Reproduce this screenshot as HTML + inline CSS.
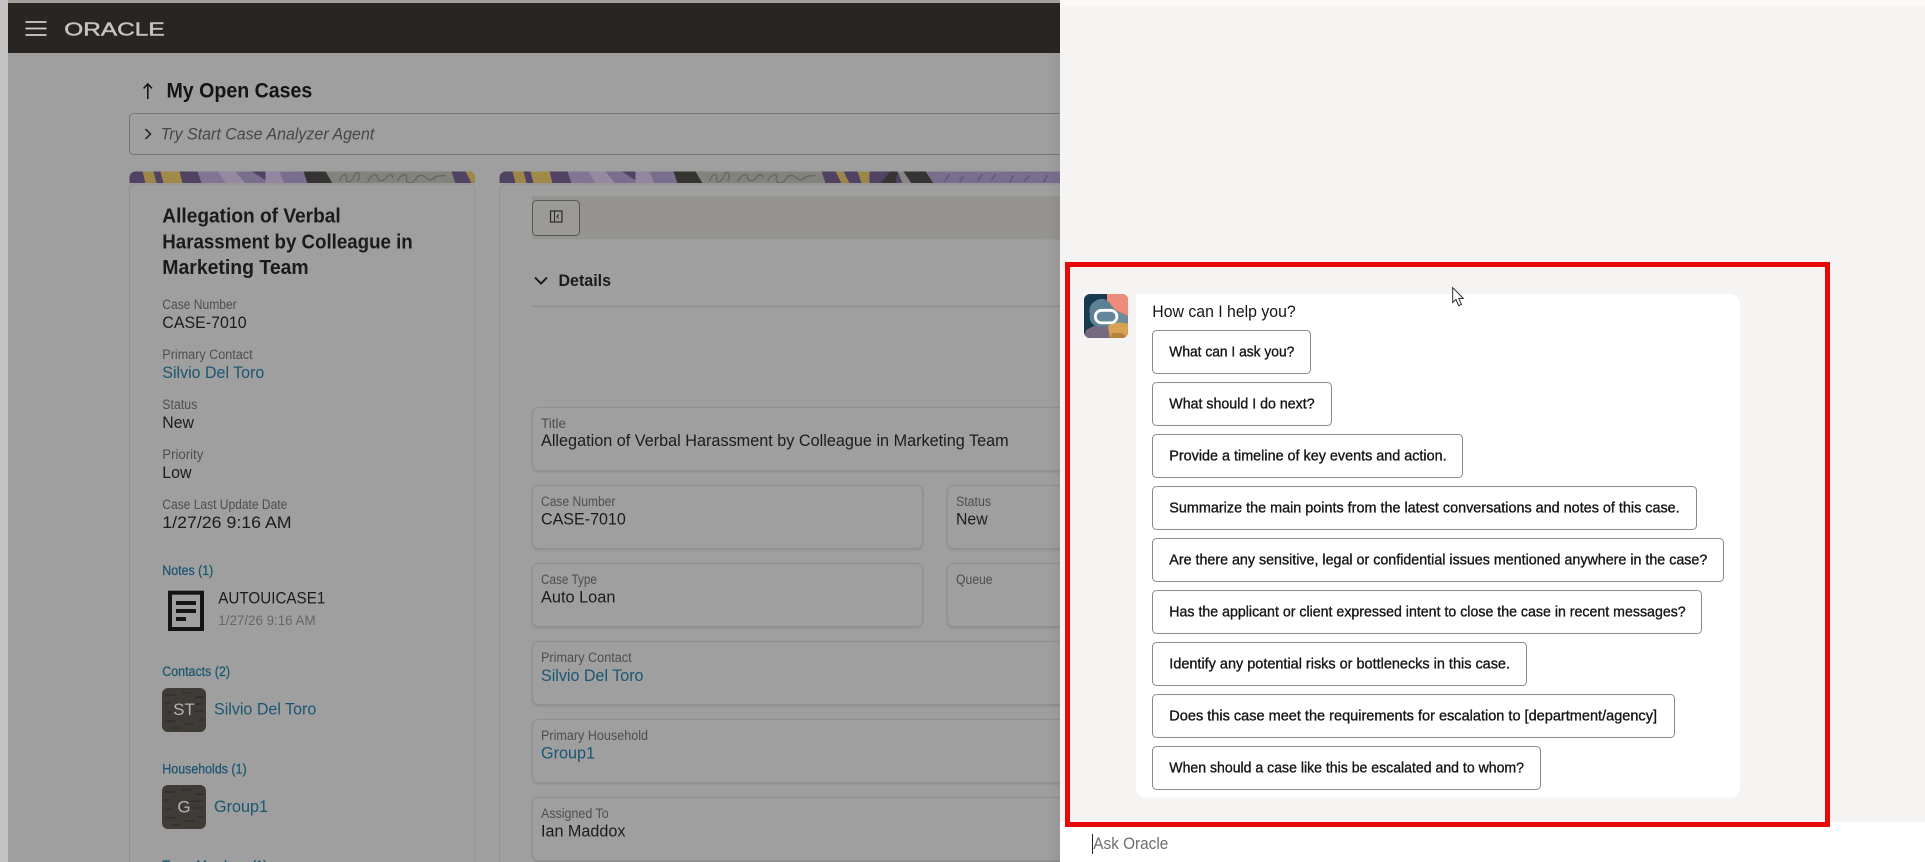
<!DOCTYPE html>
<html lang="en">
<head>
<meta charset="utf-8">
<title>My Open Cases</title>
<style>
html,body{margin:0;padding:0;width:1925px;height:862px;overflow:hidden;background:#9f9f9f}
svg{display:block;position:absolute;left:0;top:0}
text{font-family:"Liberation Sans",sans-serif;white-space:pre}
.lbl{font-size:13.5px;fill:#4e4e4e}
.val{font-size:17px;fill:#1c1c1c}
.lnk{font-size:17px;fill:#1a5672}
.sec{font-size:13.5px;fill:#1a5672;stroke:#1a5672;stroke-width:.25px}
.ttl{font-size:20.5px;font-weight:bold;fill:#1b1b1b}
.btn{fill:#fff;stroke:#8a8a8a;stroke-width:1}
.btxt{font-size:15px;fill:#161513;stroke:#161513;stroke-width:.35px}
.box{fill:#9f9f9f;stroke:#909090;stroke-width:1;filter:drop-shadow(0 1px 1px rgba(0,0,0,.12))}
</style>
</head>
<body>
<svg width="1925" height="862" viewBox="0 0 1925 862" xmlns="http://www.w3.org/2000/svg">
<defs>
<g id="pat">
<rect x="0" y="0" width="600" height="12" fill="#4f4263"/>
<polygon points="13,0 24,0 27,12 16,12" fill="#9c8748"/>
<polygon points="31,0 50,0 53,12 34,12" fill="#9f8a4a"/>
<polygon points="68,0 88,0 96,12 72,12" fill="#827593"/>
<polygon points="88,0 106,0 116,12 96,12" fill="#94899f"/>
<polygon points="106,0 136,0 136,12 116,12" fill="#7a6e8f"/>
<polygon points="122,0 136,0 136,9" fill="#4f4263"/>
<polygon points="136,0 150,0 155,12 136,12" fill="#92879f"/>
<polygon points="150,0 174,0 178,12 155,12" fill="#7a6e8f"/>
<polygon points="174,0 196,0 203,12 178,12" fill="#353433"/>
<polygon points="196,0 322,0 326,12 203,12" fill="#84827d"/>
<path d="M210 10c3-9 8-8 7-3s5 5 8-3 7 1 3 6M238 11c4-8 9-10 10-5s6 4 9 0 7-3 6 1M268 10c3-7 10-9 9-3s6 6 9 1 7-5 10-2 6 4 10-1M304 8c4-5 8-3 12-4" fill="none" stroke="#696763" stroke-width="1.4"/>
<polygon points="336,0 344,0 350,12 342,12" fill="#9c8748"/>
<polygon points="358,0 370,0 370,12 362,12" fill="#9c8748"/>
<polygon points="381,12 391,0 398,0 396,12" fill="#353433"/>
<polygon points="398,0 404,0 412,12 403,12" fill="#878684"/>
<polygon points="404,0 426,0 434,12 412,12" fill="#353433"/>
<rect x="434" y="0" width="130" height="12" fill="#7a6e8f"/>
<polygon points="426,0 436,0 434,12" fill="#7a6e8f"/>
<path d="M445 10l5-7M460 11l4-6M478 10l5-7M492 9l4-6M510 11l4-7M525 10l5-6M544 11l4-7" stroke="#5a4f70" stroke-width="1"/>
</g>
<clipPath id="b1"><path d="M129.5 183V177.5a6 6 0 0 1 6-6H469a6 6 0 0 1 6 6V183z"/></clipPath>
<clipPath id="b2"><path d="M499.5 183V177.5a6 6 0 0 1 6-6H1060V183z"/></clipPath>
<clipPath id="av"><rect x="1084" y="294" width="44" height="44" rx="6"/></clipPath>
<linearGradient id="edge" x1="0" x2="1" y1="0" y2="0"><stop offset="0" stop-color="#000" stop-opacity="0"/><stop offset="1" stop-color="#000" stop-opacity=".05"/></linearGradient>
</defs>

<!-- dimmed page -->
<rect x="0" y="0" width="1060" height="862" fill="#9f9f9f"/>
<rect x="0" y="0" width="8" height="862" fill="#c2c2c2"/>
<rect x="8" y="0" width="1052" height="3" fill="#a39f9b"/>
<rect x="8" y="3" width="1052" height="50" fill="#292522"/>
<path d="M25.5 22H46.5M25.5 28.5H46.5M25.5 35H46.5" stroke="#d0d0d0" stroke-width="1.8"/>
<text x="64.3" y="35.3" font-size="18.5" fill="#c4c4c4" stroke="#c4c4c4" stroke-width=".45" textLength="100.3" lengthAdjust="spacingAndGlyphs">ORACLE</text>

<path d="M147.8 84V99M143.6 88.4L147.8 84L152 88.4" fill="none" stroke="#111" stroke-width="1.5"/>
<text x="166.5" y="97.4" font-size="21" font-weight="bold" fill="#141414" textLength="145.8" lengthAdjust="spacingAndGlyphs">My Open Cases</text>

<rect x="129.5" y="113.5" width="960" height="41" rx="4" fill="#9f9f9f" stroke="#767676"/>
<path d="M145.5 129L150.5 134L145.5 139" fill="none" stroke="#222" stroke-width="1.5"/>
<text x="160.7" y="139.6" font-size="17" font-style="italic" fill="#474747" textLength="213.6" lengthAdjust="spacingAndGlyphs">Try Start Case Analyzer Agent</text>

<!-- banners -->
<g clip-path="url(#b1)"><use href="#pat" x="129.5" y="171.3"/></g>
<g clip-path="url(#b2)"><use href="#pat" x="499.5" y="171.3"/></g>

<!-- left card -->
<path d="M129.5 880V190a6 6 0 0 1 6-6H469a6 6 0 0 1 6 6V880" fill="#9f9f9f" stroke="#919191"/>
<text class="ttl" x="162.3" y="222.5" textLength="178.4" lengthAdjust="spacingAndGlyphs">Allegation of Verbal</text>
<text class="ttl" x="162.3" y="248.5" textLength="250.4" lengthAdjust="spacingAndGlyphs">Harassment by Colleague in</text>
<text class="ttl" x="162.3" y="273.8" textLength="146.4" lengthAdjust="spacingAndGlyphs">Marketing Team</text>

<text class="lbl" x="162.3" y="309" textLength="74.4" lengthAdjust="spacingAndGlyphs">Case Number</text>
<text class="val" x="162.3" y="327.8" textLength="84.3" lengthAdjust="spacingAndGlyphs">CASE-7010</text>
<text class="lbl" x="162.3" y="359" textLength="90.3" lengthAdjust="spacingAndGlyphs">Primary Contact</text>
<text class="lnk" x="162.3" y="377.8" textLength="102" lengthAdjust="spacingAndGlyphs">Silvio Del Toro</text>
<text class="lbl" x="162.3" y="409" textLength="35" lengthAdjust="spacingAndGlyphs">Status</text>
<text class="val" x="162.3" y="427.8" textLength="31.7" lengthAdjust="spacingAndGlyphs">New</text>
<text class="lbl" x="162.3" y="459" textLength="41" lengthAdjust="spacingAndGlyphs">Priority</text>
<text class="val" x="162.3" y="477.8" textLength="29.3" lengthAdjust="spacingAndGlyphs">Low</text>
<text class="lbl" x="162.3" y="509" textLength="125" lengthAdjust="spacingAndGlyphs">Case Last Update Date</text>
<text class="val" x="162.3" y="527.8" textLength="129.3" lengthAdjust="spacingAndGlyphs">1/27/26 9:16 AM</text>

<text class="sec" x="162.3" y="575" textLength="51" lengthAdjust="spacingAndGlyphs">Notes (1)</text>
<rect x="170" y="592.7" width="32" height="36.3" fill="none" stroke="#151515" stroke-width="4"/>
<path d="M176 603H196M176 611H196M176 619H186" stroke="#151515" stroke-width="4"/>
<text class="val" x="218.3" y="603.6" textLength="107" lengthAdjust="spacingAndGlyphs">AUTOUICASE1</text>
<text x="218.3" y="625" font-size="13.5" fill="#666" textLength="97.3" lengthAdjust="spacingAndGlyphs">1/27/26 9:16 AM</text>

<text class="sec" x="162.3" y="676" textLength="67.7" lengthAdjust="spacingAndGlyphs">Contacts (2)</text>
<rect x="162" y="688" width="44" height="44" rx="6" fill="#3f3b37"/>
<path d="M165 695h10M182 693h9M196 697h8M164 703h6M190 704h12M166 712h5M194 711h9M165 721h11M184 724h10M198 720h6M172 728h8" stroke="#2a2724" stroke-width="1"/>
<text x="184" y="715" font-size="17" fill="#b5b5b5" text-anchor="middle">ST</text>
<text class="lnk" x="214" y="714.6" textLength="102.3" lengthAdjust="spacingAndGlyphs">Silvio Del Toro</text>

<text class="sec" x="162.3" y="773.3" textLength="84.3" lengthAdjust="spacingAndGlyphs">Households (1)</text>
<rect x="162" y="785" width="44" height="44" rx="6" fill="#3f3b37"/>
<path d="M165 792h10M182 790h9M196 794h8M164 800h6M190 801h12M166 809h5M194 808h9M165 818h11M184 821h10M198 817h6M172 825h8" stroke="#2a2724" stroke-width="1"/>
<text x="184" y="812.3" font-size="17" fill="#b5b5b5" text-anchor="middle">G</text>
<text class="lnk" x="214" y="811.9" textLength="54" lengthAdjust="spacingAndGlyphs">Group1</text>
<text class="sec" x="162.3" y="870" textLength="105" lengthAdjust="spacingAndGlyphs">Team Members (1)</text>

<!-- right card -->
<path d="M499.5 880V190a6 6 0 0 1 6-6H1100" fill="#9f9f9f" stroke="#919191"/>
<rect x="532" y="196" width="528" height="43.3" fill="#959490"/>
<rect x="532.5" y="200.5" width="47" height="35" rx="4" fill="#9b9a97" stroke="#575757"/>
<rect x="550.5" y="211" width="11.5" height="11" fill="none" stroke="#2b2b2b" stroke-width="1.2"/>
<path d="M554.5 211V222M558.7 214.7L556.8 216.5L558.7 218.3" fill="none" stroke="#2b2b2b" stroke-width="1"/>
<path d="M535 277.5L541 283.5L547 277.5" fill="none" stroke="#141414" stroke-width="1.9"/>
<text x="558.5" y="285.8" font-size="17" font-weight="bold" fill="#1b1b1b" textLength="52.5" lengthAdjust="spacingAndGlyphs">Details</text>
<rect x="532" y="305.8" width="528" height="1" fill="#8a8a8a"/>

<rect class="box" x="532.5" y="407.5" width="600" height="63" rx="6"/>
<text class="lbl" x="541" y="428" textLength="25" lengthAdjust="spacingAndGlyphs">Title</text>
<text class="val" x="541" y="446.2" textLength="467.7" lengthAdjust="spacingAndGlyphs">Allegation of Verbal Harassment by Colleague in Marketing Team</text>

<rect class="box" x="532.5" y="485.5" width="390" height="63" rx="6"/>
<text class="lbl" x="541" y="506.2" textLength="74.4" lengthAdjust="spacingAndGlyphs">Case Number</text>
<text class="val" x="541" y="524.6" textLength="84.8" lengthAdjust="spacingAndGlyphs">CASE-7010</text>
<rect class="box" x="947.5" y="485.5" width="200" height="63" rx="6"/>
<text class="lbl" x="956" y="506.2" textLength="35" lengthAdjust="spacingAndGlyphs">Status</text>
<text class="val" x="956" y="524.6" textLength="31.6" lengthAdjust="spacingAndGlyphs">New</text>

<rect class="box" x="532.5" y="563.5" width="390" height="63" rx="6"/>
<text class="lbl" x="541" y="584" textLength="55.9" lengthAdjust="spacingAndGlyphs">Case Type</text>
<text class="val" x="541" y="602.6" textLength="74.4" lengthAdjust="spacingAndGlyphs">Auto Loan</text>
<rect class="box" x="947.5" y="563.5" width="200" height="63" rx="6"/>
<text class="lbl" x="956" y="584" textLength="36.6" lengthAdjust="spacingAndGlyphs">Queue</text>

<rect class="box" x="532.5" y="641.5" width="600" height="63" rx="6"/>
<text class="lbl" x="541" y="662" textLength="90.6" lengthAdjust="spacingAndGlyphs">Primary Contact</text>
<text class="lnk" x="541" y="680.8" textLength="102.5" lengthAdjust="spacingAndGlyphs">Silvio Del Toro</text>

<rect class="box" x="532.5" y="719.5" width="600" height="63" rx="6"/>
<text class="lbl" x="541" y="740" textLength="107" lengthAdjust="spacingAndGlyphs">Primary Household</text>
<text class="lnk" x="541" y="758.6" textLength="54" lengthAdjust="spacingAndGlyphs">Group1</text>

<rect class="box" x="532.5" y="797.5" width="600" height="63" rx="6"/>
<text class="lbl" x="541" y="818" textLength="67.7" lengthAdjust="spacingAndGlyphs">Assigned To</text>
<text class="val" x="541" y="836.6" textLength="84.4" lengthAdjust="spacingAndGlyphs">Ian Maddox</text>

<rect x="1046" y="53" width="14" height="809" fill="url(#edge)"/>

<!-- side panel -->
<rect x="1060" y="0" width="865" height="862" fill="#f5f4f2"/>
<rect x="1060" y="0" width="865" height="7" fill="#faf9f7"/>
<rect x="1060" y="822" width="865" height="40" fill="#fff"/>

<g clip-path="url(#av)">
<rect x="1084" y="294" width="44" height="44" fill="#173a4e"/>
<path d="M1107 294H1128V316L1117 311L1107 302z" fill="#ee8c7c"/>
<path d="M1107 302L1117 311L1128 316V326H1106z" fill="#6f8c9c"/>
<path d="M1108 326C1114 322 1122 322 1128 324V338H1108z" fill="#d9a253"/>
<path d="M1086 330L1098 324L1108 326L1110 338H1084z" fill="#756a80"/>
<path d="M1097 300C1106 296 1112 304 1113 310C1118 316 1114 326 1104 327C1094 328 1088 322 1090 314C1088 308 1091 303 1097 300z" fill="#5c8094"/>
<path d="M1112 333l10 0 6 5h-18z" fill="#b5813f"/>
</g>
<rect x="1095.3" y="310.3" width="21.6" height="12.6" rx="6.3" fill="#6f93a4" fill-opacity=".45" stroke="#fff" stroke-width="2.8"/>

<path d="M1136 294H1730a10 10 0 0 1 10 10V787.7a10 10 0 0 1-10 10H1146a10 10 0 0 1-10-10z" fill="#fff"/>
<text x="1152.3" y="316.8" font-size="17" fill="#161513" textLength="143.4" lengthAdjust="spacingAndGlyphs">How can I help you?</text>

<rect class="btn" x="1152.5" y="330.5" width="158" height="43" rx="4"/>
<text class="btxt" x="1169.3" y="356.7" textLength="125" lengthAdjust="spacingAndGlyphs">What can I ask you?</text>
<rect class="btn" x="1152.5" y="382.5" width="179" height="43" rx="4"/>
<text class="btxt" x="1169.3" y="408.7" textLength="145.3" lengthAdjust="spacingAndGlyphs">What should I do next?</text>
<rect class="btn" x="1152.5" y="434.5" width="310" height="43" rx="4"/>
<text class="btxt" x="1169.3" y="460.7" textLength="277.3" lengthAdjust="spacingAndGlyphs">Provide a timeline of key events and action.</text>
<rect class="btn" x="1152.5" y="486.5" width="544" height="43" rx="4"/>
<text class="btxt" x="1169.3" y="512.7" textLength="510.4" lengthAdjust="spacingAndGlyphs">Summarize the main points from the latest conversations and notes of this case.</text>
<rect class="btn" x="1152.5" y="538.5" width="571" height="43" rx="4"/>
<text class="btxt" x="1169.3" y="564.7" textLength="538" lengthAdjust="spacingAndGlyphs">Are there any sensitive, legal or confidential issues mentioned anywhere in the case?</text>
<rect class="btn" x="1152.5" y="590.5" width="549" height="43" rx="4"/>
<text class="btxt" x="1169.3" y="616.7" textLength="516.4" lengthAdjust="spacingAndGlyphs">Has the applicant or client expressed intent to close the case in recent messages?</text>
<rect class="btn" x="1152.5" y="642.5" width="374" height="43" rx="4"/>
<text class="btxt" x="1169.3" y="668.7" textLength="340.7" lengthAdjust="spacingAndGlyphs">Identify any potential risks or bottlenecks in this case.</text>
<rect class="btn" x="1152.5" y="694.5" width="522" height="43" rx="4"/>
<text class="btxt" x="1169.3" y="720.7" textLength="487.7" lengthAdjust="spacingAndGlyphs">Does this case meet the requirements for escalation to [department/agency]</text>
<rect class="btn" x="1152.5" y="746.5" width="388" height="43" rx="4"/>
<text class="btxt" x="1169.3" y="772.7" textLength="354.7" lengthAdjust="spacingAndGlyphs">When should a case like this be escalated and to whom?</text>

<rect x="1067.5" y="264.5" width="760" height="560" fill="none" stroke="#e90808" stroke-width="5"/>

<path d="M1452.7 287.7V302.5L1456 299.4L1458.6 305.6L1461.4 304.4L1458.8 298.4H1463.3z" fill="#fff" stroke="#2a2a2a" stroke-width="1"/>

<rect x="1092" y="834" width="1" height="20" fill="#222"/>
<text x="1093.3" y="849" font-size="17" fill="#6f6e6b" textLength="75" lengthAdjust="spacingAndGlyphs">Ask Oracle</text>
</svg>
</body>
</html>
